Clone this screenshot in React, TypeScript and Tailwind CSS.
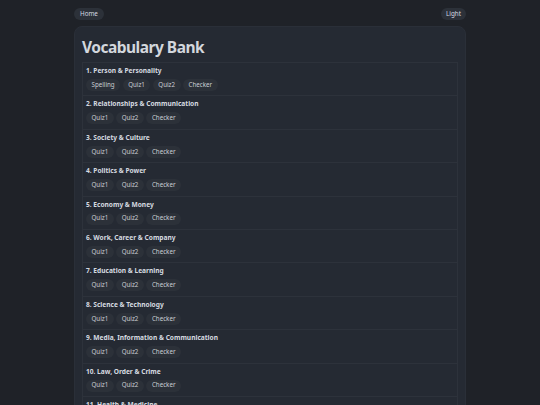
import React from 'react'

type Topic = {
  title: string
  links: string[]
}

const topics: Topic[] = [
  {title: '1. Person & Personality', links: ['Spelling', 'Quiz1', 'Quiz2', 'Checker']},
  {title: '2. Relationships & Communication', links: ['Quiz1', 'Quiz2', 'Checker']},
  {title: '3. Society & Culture', links: ['Quiz1', 'Quiz2', 'Checker']},
  {title: '4. Politics & Power', links: ['Quiz1', 'Quiz2', 'Checker']},
  {title: '5. Economy & Money', links: ['Quiz1', 'Quiz2', 'Checker']},
  {title: '6. Work, Career & Company', links: ['Quiz1', 'Quiz2', 'Checker']},
  {title: '7. Education & Learning', links: ['Quiz1', 'Quiz2', 'Checker']},
  {title: '8. Science & Technology', links: ['Quiz1', 'Quiz2', 'Checker']},
  {title: '9. Media, Information & Communication', links: ['Quiz1', 'Quiz2', 'Checker']},
  {title: '10. Law, Order & Crime', links: ['Quiz1', 'Quiz2', 'Checker']},
  {title: '11. Health & Medicine', links: ['Quiz1', 'Quiz2', 'Checker']},
  {title: '12. Environment & Nature', links: ['Quiz1', 'Quiz2', 'Checker']},
]

function Pill({label}: {label: string}) {
  return (
    <a
      href="#"
      className="inline-flex h-[12px] items-center rounded-full bg-[#2c3139] px-[5.5px] text-[6.2px] leading-none text-[#c9cdd4]"
    >
      {label}
    </a>
  )
}

export default function App() {
  return (
    <div
      className="h-[405px] overflow-hidden bg-[#1f2228] text-[#d6dae0]"
      style={{fontFamily: '"Noto Sans", "Open Sans", sans-serif'}}
    >
      <div className="mx-auto w-[392px] pt-[8px]">
        <div className="flex items-center justify-between">
          <a
            href="#"
            className="inline-flex h-[12px] items-center rounded-full bg-[#2c3139] px-[6px] text-[6.3px] leading-none text-[#d6dae0]"
          >
            Home
          </a>
          <button className="inline-flex h-[12px] items-center rounded-full bg-[#2c3139] px-[5px] text-[6.3px] leading-none text-[#d6dae0]">
            Light
          </button>
        </div>

        <div className="mt-[6px] rounded-[8px] border border-[#2a2f38] bg-[#252a33] px-[7px] pt-[8px] pb-[8px]">
          <h1 className="text-[15.5px] font-bold leading-[24px] tracking-[-0.5px] text-[#d3d7dd]">
            Vocabulary Bank
          </h1>
          <ul className="mt-[3px] border border-[#2d323b]">
            {topics.map((t) => (
              <li
                key={t.title}
                className="border-b border-[#2d323b] px-[3px] pt-[3px] pb-[4.4px] last:border-b-0"
              >
                <div className="text-[6.6px] font-bold leading-[10px] text-[#d6dae0]">{t.title}</div>
                <div className="mt-[3px] flex gap-[2.5px]">
                  {t.links.map((l) => (
                    <Pill key={l} label={l} />
                  ))}
                </div>
              </li>
            ))}
          </ul>
        </div>
      </div>
    </div>
  )
}
